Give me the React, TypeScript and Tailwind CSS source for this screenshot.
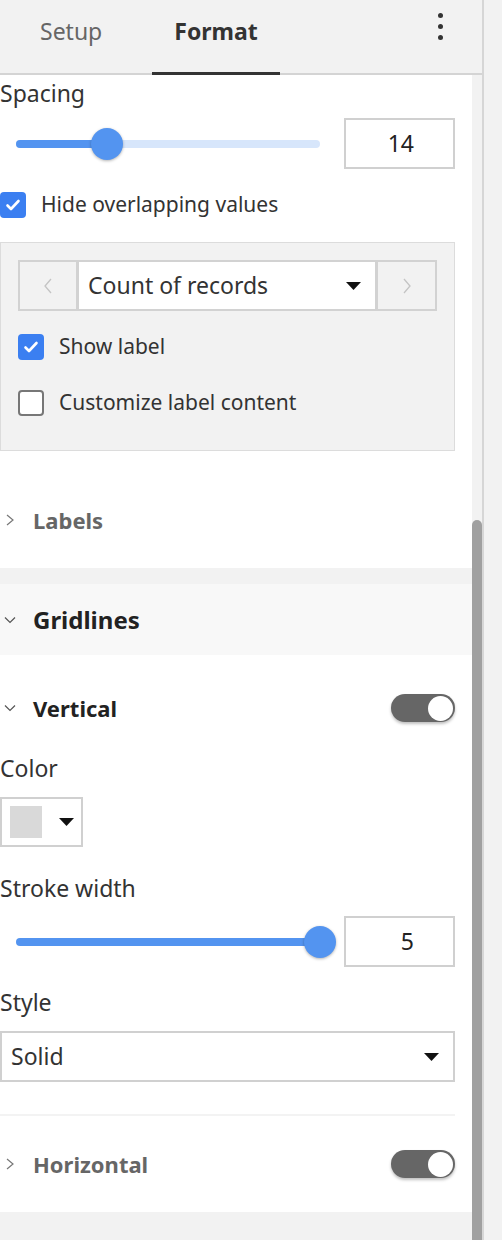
import React from 'react';

const Caret: React.FC = () => (
  <svg width="15" height="8" viewBox="0 0 15 8">
    <path d="M0 0h15L7.5 8z" fill="#111" />
  </svg>
);

const ChevronRight: React.FC<{ color?: string }> = ({ color = '#777' }) => (
  <svg width="10" height="12" viewBox="0 0 10 12">
    <path d="M2 1l6 5-6 5" fill="none" stroke={color} strokeWidth="1.2" />
  </svg>
);

const ChevronDown: React.FC = () => (
  <svg width="12" height="8" viewBox="0 0 12 8">
    <path d="M1 1.5l5 5 5-5" fill="none" stroke="#555" strokeWidth="1.2" />
  </svg>
);

const Checkbox: React.FC<{ checked?: boolean }> = ({ checked }) =>
  checked ? (
    <span className="flex h-[26px] w-[26px] shrink-0 items-center justify-center rounded-[4px] bg-[#3b7ff1]">
      <svg width="18" height="18" viewBox="0 0 18 18">
        <path
          d="M3.5 9.5l3.5 3.5 7.5-8"
          fill="none"
          stroke="white"
          strokeWidth="2.6"
          strokeLinecap="round"
          strokeLinejoin="round"
        />
      </svg>
    </span>
  ) : (
    <span className="h-[26px] w-[26px] shrink-0 rounded-[4px] border-2 border-[#777] bg-white" />
  );

const Slider: React.FC<{ pct: number }> = ({ pct }) => (
  <div className="relative ml-4 flex h-[32px] w-[304px] items-center">
    <div className="h-2 w-full overflow-hidden rounded-full bg-[#d7e6fb]">
      <div className="h-full bg-[#5394f0]" style={{ width: `${pct}%` }} />
    </div>
    <div
      className="absolute top-0 h-[32px] w-[32px] rounded-full bg-[#5394f0] shadow-[0_1px_3px_rgba(0,0,0,0.3)]"
      style={{ left: `calc(${pct}% - 16px)` }}
    />
  </div>
);

const SliderRow: React.FC<{ pct: number; value: string; className?: string }> = ({ pct, value, className }) => (
  <div className={`flex h-[51px] items-center justify-between ${className ?? ''}`}>
    <Slider pct={pct} />
    <div className="flex h-[51px] w-[111px] items-center justify-end border-2 border-[#d0d0d0] pr-[39px] text-[23px] text-[#222]">
      {value}
    </div>
  </div>
);

const Toggle: React.FC = () => (
  <div className="relative h-[28px] w-[64px] rounded-full bg-[#666] shadow-[0_2px_3px_rgba(0,0,0,0.25)]">
    <div className="absolute right-[2px] top-[1.5px] h-[25px] w-[25px] rounded-full bg-white" />
  </div>
);

const Label: React.FC<{ children: React.ReactNode; className?: string }> = ({ children, className }) => (
  <div className={`flex h-[30px] items-center text-[23px] text-[#333] ${className ?? ''}`}>{children}</div>
);

export default function App() {
  return (
    <div className="flex h-[1240px] w-[502px] overflow-hidden bg-[#f2f2f2] font-['Noto_Sans',sans-serif]">
      <div className="flex w-[484px] flex-col border-r-2 border-[#d6d6d6]">
        {/* Tabs */}
        <div className="flex h-[75px] shrink-0 items-start border-b-2 border-[#d4d4d4] bg-[#f2f2f2]">
          <div className="ml-[40px] flex h-[72px] w-[112px] items-center pb-[10px] text-[23px] text-[#666]">Setup</div>
          <div className="flex h-[75px] w-[128px] items-center justify-center border-b-[3px] border-[#333] pb-[10px] text-[23px] font-bold text-[#333]">
            Format
          </div>
          <div className="ml-auto mr-[37px] mt-[13px] flex w-[10px] flex-col items-center gap-[6px]">
            <span className="h-[5px] w-[5px] rounded-full bg-[#333]" />
            <span className="h-[5px] w-[5px] rounded-full bg-[#333]" />
            <span className="h-[5px] w-[5px] rounded-full bg-[#333]" />
          </div>
        </div>

        <div className="flex min-h-0 flex-1">
          {/* Panel content */}
          <div className="flex w-[472px] flex-col bg-[#f2f2f2]">
            <div className="flex flex-col bg-white pr-[17px]">
              <div className="flex h-[36px] items-center text-[23px] text-[#333]">Spacing</div>
              <SliderRow pct={30} value="14" className="mt-[7px]" />

              <div className="mt-[23px] flex h-[26px] items-center gap-[15px] text-[21px] text-[#333]">
                <Checkbox checked />
                <span>Hide overlapping values</span>
              </div>

              <div className="mt-[24px] flex h-[209px] flex-col border border-[#dcdcdc] bg-[#f2f2f2] px-[17px] pt-[17px]">
                <div className="flex h-[51px] gap-[3px] border-2 border-[#d2d2d2] bg-[#d2d2d2]">
                  <div className="flex w-[56px] items-center justify-center bg-[#f2f2f2]">
                    <svg width="10" height="16" viewBox="0 0 10 16">
                      <path d="M8 1L2 8l6 7" fill="none" stroke="#c4c4c4" strokeWidth="1.3" />
                    </svg>
                  </div>
                  <div className="flex flex-1 items-center justify-between bg-white pl-[9px] pr-[14px] text-[23px] text-[#333]">
                    <span>Count of records</span>
                    <Caret />
                  </div>
                  <div className="flex w-[57px] items-center justify-center bg-[#f2f2f2]">
                    <svg width="10" height="16" viewBox="0 0 10 16">
                      <path d="M2 1l6 7-6 7" fill="none" stroke="#c4c4c4" strokeWidth="1.3" />
                    </svg>
                  </div>
                </div>
                <div className="mt-[23px] flex h-[26px] items-center gap-[15px] text-[21px] text-[#333]">
                  <Checkbox checked />
                  <span>Show label</span>
                </div>
                <div className="mt-[30px] flex h-[26px] items-center gap-[15px] text-[21px] text-[#333]">
                  <Checkbox />
                  <span>Customize label content</span>
                </div>
              </div>

              <div className="mt-[21px] flex h-[96px] items-center">
                <div className="w-[33px] pl-[5px]">
                  <ChevronRight />
                </div>
                <span className="text-[22px] font-bold text-[#666]">Labels</span>
              </div>
            </div>

            <div className="h-[16px] shrink-0" />

            {/* Gridlines */}
            <div className="flex h-[71px] shrink-0 items-center bg-[#f8f8f8]">
              <div className="w-[33px] pl-[4px]">
                <ChevronDown />
              </div>
              <span className="text-[24px] font-bold text-[#222]">Gridlines</span>
            </div>

            <div className="flex flex-col bg-white pb-[28px] pr-[17px]">
              <div className="mt-[33px] flex h-[40px] items-center">
                <div className="w-[33px] pl-[4px]">
                  <ChevronDown />
                </div>
                <span className="text-[22px] font-bold text-[#222]">Vertical</span>
                <div className="ml-auto">
                  <Toggle />
                </div>
              </div>

              <Label className="mt-[25px]">Color</Label>
              <div className="mt-[14px] flex h-[50px] w-[83px] items-center border-2 border-[#d0d0d0]">
                <div className="ml-[8px] h-[32px] w-[32px] bg-[#d9d9d9]" />
                <div className="ml-[17px]">
                  <Caret />
                </div>
              </div>

              <Label className="mt-[26px]">Stroke width</Label>
              <SliderRow pct={100} value="5" className="mt-[13px]" />

              <Label className="mt-[20px]">Style</Label>
              <div className="mt-[14px] flex h-[51px] items-center justify-between border-2 border-[#d0d0d0] pl-[9px] pr-[14px] text-[23px] text-[#333]">
                <span>Solid</span>
                <Caret />
              </div>

              <div className="mt-[32px] h-[2px] bg-[#f3f3f3]" />

              <div className="mt-[28px] flex h-[40px] items-center">
                <div className="w-[33px] pl-[5px]">
                  <ChevronRight />
                </div>
                <span className="text-[22px] font-bold text-[#666]">Horizontal</span>
                <div className="ml-auto">
                  <Toggle />
                </div>
              </div>
            </div>
          </div>

          {/* Scrollbar */}
          <div className="flex w-[10px] flex-col bg-[#f2f2f2]">
            <div className="h-[445px] shrink-0" />
            <div className="flex-1 rounded-t-full bg-[#a0a0a0]" />
          </div>
        </div>
      </div>
      <div className="flex-1" />
    </div>
  );
}
